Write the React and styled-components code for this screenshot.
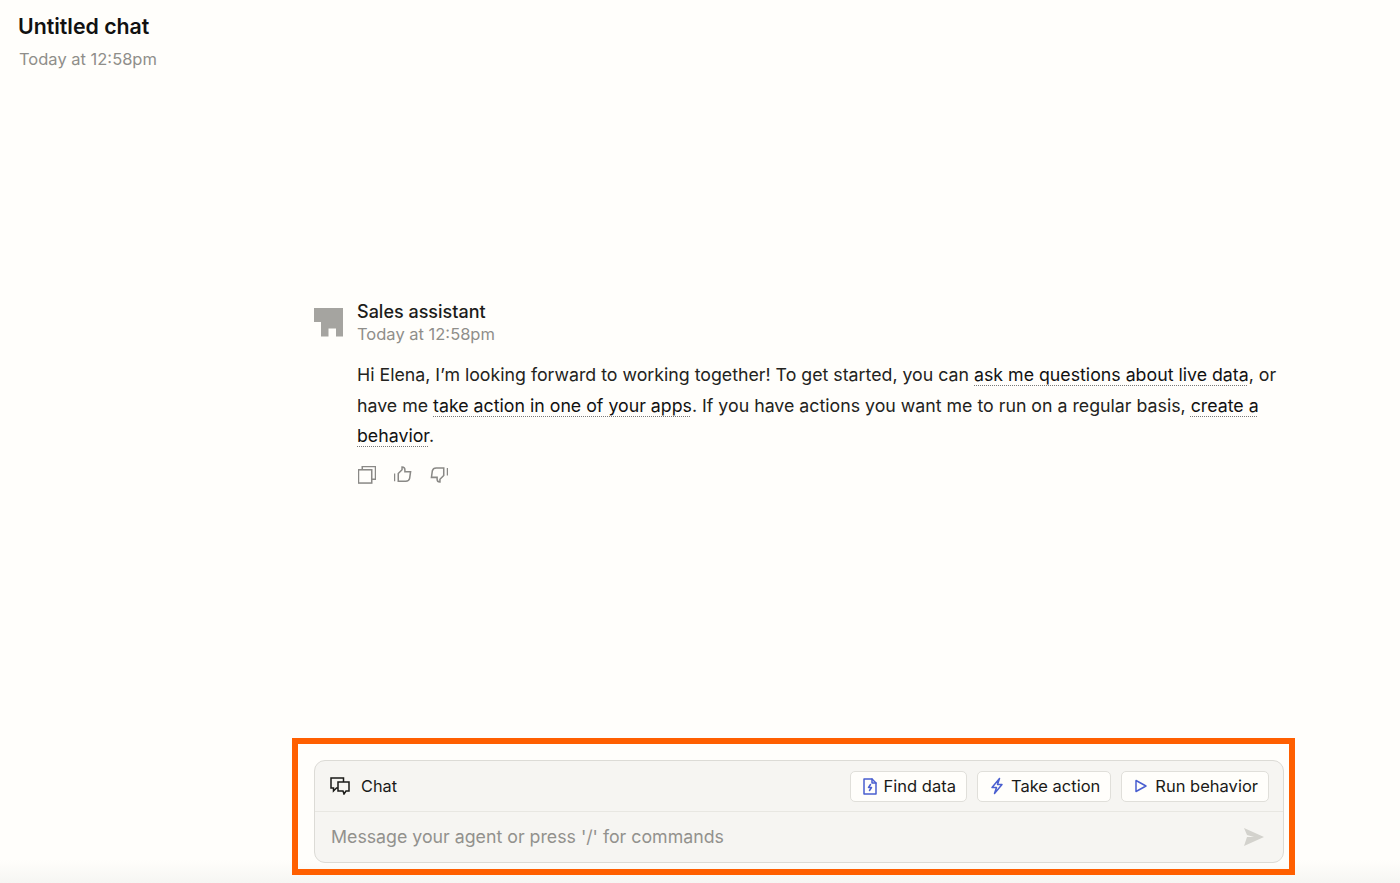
import React from 'react'
import styled, { createGlobalStyle } from 'styled-components'

const Global = createGlobalStyle`
  html, body { margin: 0; padding: 0; height: 100%; }
  body {
    background: #fffefb;
    font-family: Inter, "Liberation Sans", sans-serif;
    color: #1a1a18;
    overflow: hidden;
  }
`

const Page = styled.div`
  width: 1400px;
  height: 883px;
  display: flex;
  flex-direction: column;
  background: linear-gradient(#fffefb 0, #fffefb 860px, #f6f6f3 883px);
`

const Header = styled.header`
  padding: 13px 18px 0;
`

const Title = styled.h1`
  margin: 0;
  font-size: 21.3px;
  line-height: 26px;
  font-weight: 600;
  color: #111;
`

const Stamp = styled.div`
  font-size: 16.5px;
  line-height: 22px;
  color: #8f8e8a;
`

const HeaderStamp = styled(Stamp)`
  margin: 9px 0 0 1px;
`

const Thread = styled.main`
  flex: 1;
  padding: 0 0 0 314px;
`

const Message = styled.article`
  margin-top: 230px;
  width: 970px;
  display: flex;
  gap: 14px;
`

const Avatar = styled.svg`
  width: 29px;
  height: 29px;
  margin-top: 8px;
  flex: none;
`

const Body = styled.div`
  flex: 1;
`

const Sender = styled.div`
  font-size: 18px;
  line-height: 23px;
  font-weight: 500;
  color: #1c1c1a;
`

const Text = styled.p`
  margin: 15px 0 0;
  font-size: 17.75px;
  line-height: 30.5px;
  color: #232320;
`

const Link = styled.a`
  color: #111;
  text-decoration: underline dotted #777;
  text-decoration-thickness: 1px;
  text-underline-offset: 4px;
`

const Actions = styled.div`
  margin: 14.5px 0 0 1px;
  display: flex;
  gap: 18px;
`

const ActionIcon = styled.svg`
  width: 18px;
  height: 18px;
  fill: none;
  stroke: #8a8986;
  stroke-width: 1.6;
`

const Annotation = styled.section`
  margin: 0 0 8px 292px;
  width: 1003px;
  height: 137px;
  box-sizing: border-box;
  border: 6px solid #ff5f00;
  padding: 16px 5px 6px 16px;
`

const Composer = styled.div`
  height: 100%;
  box-sizing: border-box;
  background: #f6f5f2;
  border: 1.5px solid #dcdbd6;
  border-radius: 11px;
  display: flex;
  flex-direction: column;
`

const ComposerTop = styled.div`
  height: 50px;
  padding: 0 14px 0 15px;
  display: flex;
  align-items: center;
  border-bottom: 1px solid #e8e7e2;
`

const ChatLabel = styled.div`
  display: flex;
  align-items: center;
  gap: 11px;
  font-size: 16.3px;
  color: #1a1a18;
  margin-right: auto;
`

const Shortcuts = styled.div`
  display: flex;
  gap: 10px;
`

const Shortcut = styled.button`
  height: 31px;
  padding: 0 10px;
  display: flex;
  align-items: center;
  gap: 5px;
  background: #fffefb;
  border: 1.5px solid #e0dfda;
  border-radius: 5px;
  font: 400 16.5px Inter, "Liberation Sans", sans-serif;
  color: #1a1a18;
`

const BlueIcon = styled.svg`
  width: 18px;
  height: 18px;
  fill: none;
  stroke: #4a5fd0;
  stroke-width: 1.5;
  stroke-linejoin: round;
  stroke-linecap: round;
`

const InputRow = styled.div`
  flex: 1;
  padding: 0 18px 0 16px;
  display: flex;
  align-items: center;
  justify-content: space-between;
`

const Placeholder = styled.span`
  margin-bottom: 2px;
  font-size: 17.75px;
  color: #92918d;
`

const SendIcon = styled.svg`
  width: 22px;
  height: 20px;
  fill: #d3d2cd;
`

const actions = [
  {
    label: 'Find data',
    icon: (
      <>
        <path d="M3 2h8l4 4v11H3z" />
        <path d="M11 2v4h4" />
        <path d="M9.500 7.500 7.500 10.500h3L8.500 13.500" />
      </>
    ),
  },
  {
    label: 'Take action',
    icon: <path d="M11.500 1.500 4 10.500h4.500L6.500 16.500 14 7.500H9.500z" />,
  },
  {
    label: 'Run behavior',
    icon: <path d="M4 3.500v11L14 9z" />,
  },
]

export default function App() {
  return (
    <Page>
      <Global />
      <Header>
        <Title>Untitled chat</Title>
        <HeaderStamp>Today at 12:58pm</HeaderStamp>
      </Header>
      <Thread>
        <Message>
          <Avatar viewBox="0 0 29 29">
            <path d="M0 0h29v28.500h-7v-8h-7.500v8H7V14H0z" fill="#a5a4a0" />
          </Avatar>
          <Body>
            <Sender>Sales assistant</Sender>
            <Stamp>Today at 12:58pm</Stamp>
            <Text>
              Hi Elena, I’m looking forward to working together! To get started, you can{' '}
              <Link>ask me questions about live data</Link>, or have me{' '}
              <Link>take action in one of your apps</Link>. If you have actions you want me to run
              on a regular basis, <Link>create a behavior</Link>.
            </Text>
            <Actions>
              <ActionIcon viewBox="1.500 2 19 19">
                <rect x="2" y="6" width="14" height="14" />
                <path d="M6 6V2.500h14V16h-4" />
              </ActionIcon>
              <ActionIcon viewBox="1.500 2 19 19">
                <path d="M2 10v8M6 10l4-4V3c2 0 3 1.500 3 3v2h6l-1 7c-.5 2-2 3-4 3H6z" />
              </ActionIcon>
              <ActionIcon viewBox="1.500 2 19 19">
                <path d="M20 4v8M16 12l-4 4v3c-2 0-3-1.500-3-3v-2H3l1-7c.5-2 2-3 4-3h8z" />
              </ActionIcon>
            </Actions>
          </Body>
        </Message>
      </Thread>
      <Annotation>
        <Composer>
          <ComposerTop>
            <ChatLabel>
              <svg width="20" height="18" viewBox="0 0 20 18" fill="none" stroke="#1a1a18" strokeWidth="1.5">
                <path d="M13.500 5V1H1v10h2.500v3l3-3H8" />
                <path d="M8 5h11v9h-3l-2 3-1-3H8z" />
              </svg>
              Chat
            </ChatLabel>
            <Shortcuts>
              {actions.map(a => (
                <Shortcut key={a.label}>
                  <BlueIcon viewBox="0 0 18 18">{a.icon}</BlueIcon>
                  {a.label}
                </Shortcut>
              ))}
            </Shortcuts>
          </ComposerTop>
          <InputRow>
            <Placeholder>Message your agent or press '/' for commands</Placeholder>
            <SendIcon viewBox="0 0 22 20">
              <path d="M1 1l20 9-20 9 3-9h7L4 8z" />
            </SendIcon>
          </InputRow>
        </Composer>
      </Annotation>
    </Page>
  )
}
